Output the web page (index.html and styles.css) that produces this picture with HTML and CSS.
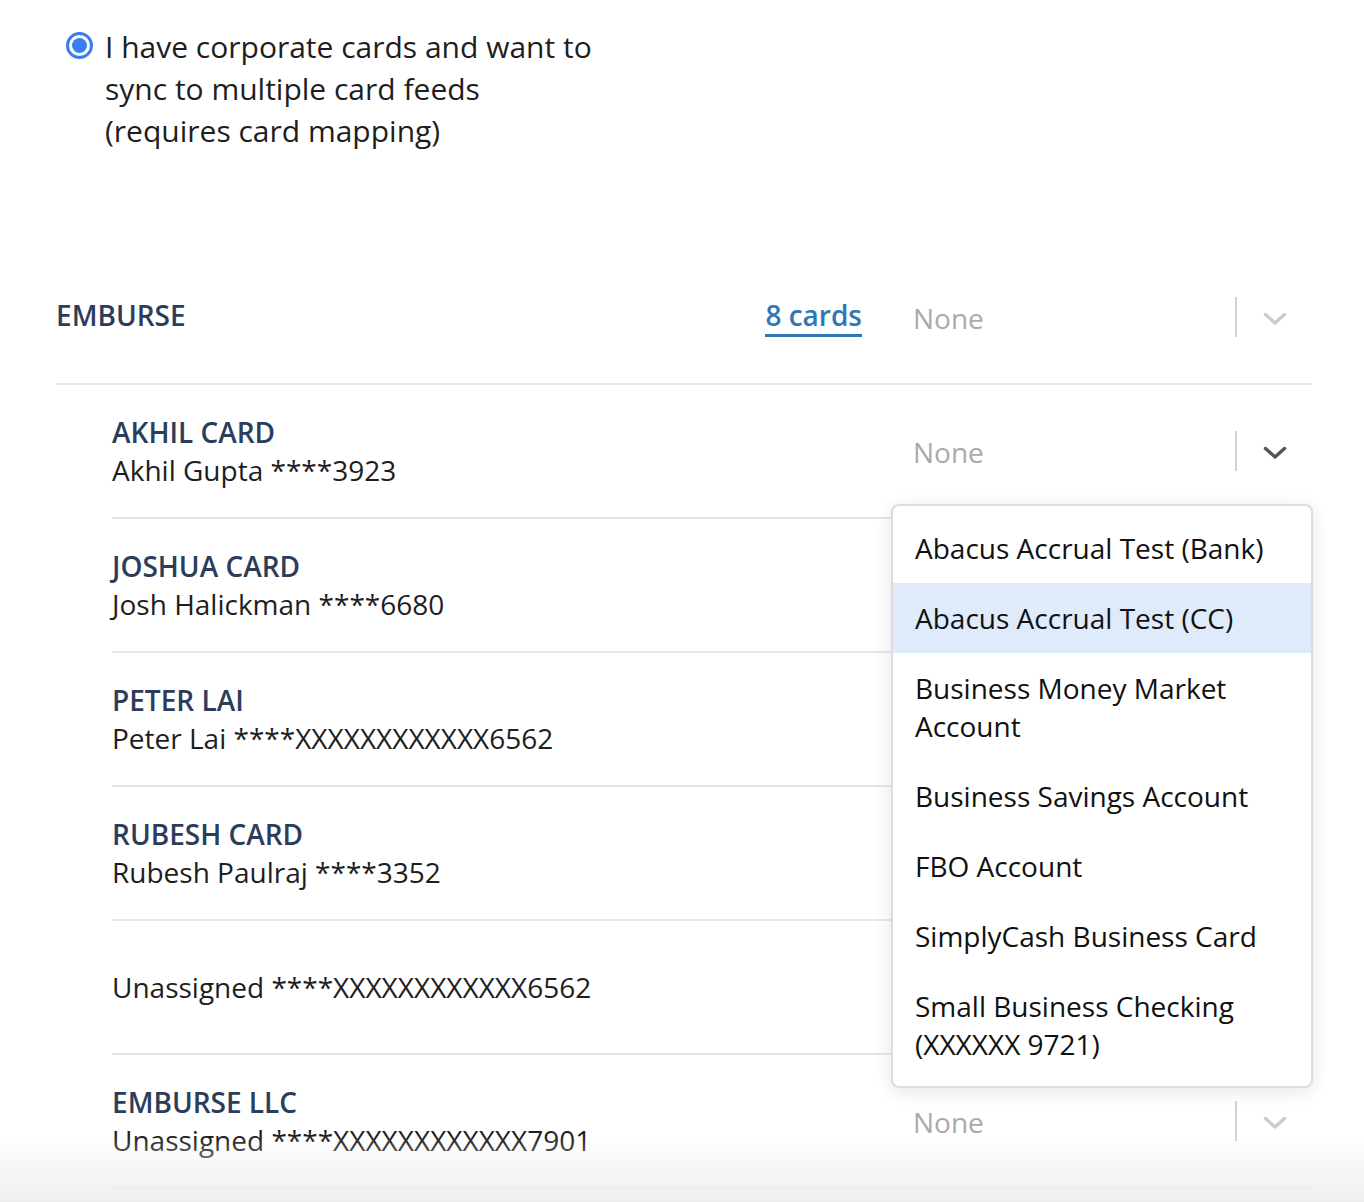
FILE: index.html
```html
<!DOCTYPE html>
<html lang="en">
<head>
<meta charset="utf-8">
<title>Card feeds</title>
<link rel="stylesheet" href="styles.css">
</head>
<body>
<div class="page">
  <label class="radio-option">
    <span class="radio"><span class="radio-dot"></span></span>
    <span class="radio-text">I have corporate cards and want to sync to multiple card feeds (requires card mapping)</span>
  </label>

  <div class="feed">
    <div class="feed-row">
      <div class="feed-name">EMBURSE</div>
      <a class="cards-link" href="#">8 cards</a>
      <div class="select">
        <span class="select-value">None</span>
        <span class="select-sep"></span>
        <span class="select-arrow light"><svg width="24" height="14" viewBox="0 0 24 14"><polyline points="2.5,2.5 12,11 21.5,2.5" fill="none" stroke="currentColor" stroke-width="3.4" stroke-linecap="round" stroke-linejoin="round"/></svg></span>
      </div>
    </div>

    <div class="card-list">
      <div class="card-row open">
        <div class="card-info">
          <div class="card-name">AKHIL CARD</div>
          <div class="card-holder">Akhil Gupta ****3923</div>
        </div>
        <div class="select">
          <span class="select-value">None</span>
          <span class="select-sep"></span>
          <span class="select-arrow dark"><svg width="24" height="14" viewBox="0 0 24 14"><polyline points="2.5,2.5 12,11 21.5,2.5" fill="none" stroke="currentColor" stroke-width="3.4" stroke-linecap="round" stroke-linejoin="round"/></svg></span>
        </div>
        <ul class="menu">
          <li class="menu-item">Abacus Accrual Test (Bank)</li>
          <li class="menu-item active">Abacus Accrual Test (CC)</li>
          <li class="menu-item">Business Money Market Account</li>
          <li class="menu-item">Business Savings Account</li>
          <li class="menu-item">FBO Account</li>
          <li class="menu-item">SimplyCash Business Card</li>
          <li class="menu-item">Small Business Checking (XXXXXX 9721)</li>
        </ul>
      </div>

      <div class="card-row">
        <div class="card-info">
          <div class="card-name">JOSHUA CARD</div>
          <div class="card-holder">Josh Halickman ****6680</div>
        </div>
      </div>

      <div class="card-row">
        <div class="card-info">
          <div class="card-name">PETER LAI</div>
          <div class="card-holder">Peter Lai ****XXXXXXXXXXXX6562</div>
        </div>
      </div>

      <div class="card-row">
        <div class="card-info">
          <div class="card-name">RUBESH CARD</div>
          <div class="card-holder">Rubesh Paulraj ****3352</div>
        </div>
      </div>

      <div class="card-row">
        <div class="card-info">
          <div class="card-holder">Unassigned ****XXXXXXXXXXXX6562</div>
        </div>
      </div>

      <div class="card-row">
        <div class="card-info">
          <div class="card-name">EMBURSE LLC</div>
          <div class="card-holder">Unassigned ****XXXXXXXXXXXX7901</div>
        </div>
        <div class="select">
          <span class="select-value">None</span>
          <span class="select-sep"></span>
          <span class="select-arrow light"><svg width="24" height="14" viewBox="0 0 24 14"><polyline points="2.5,2.5 12,11 21.5,2.5" fill="none" stroke="currentColor" stroke-width="3.4" stroke-linecap="round" stroke-linejoin="round"/></svg></span>
        </div>
      </div>
    </div>
  </div>
  <div class="bottom-fade"></div>
</div>
</body>
</html>
```

FILE: styles.css
```css
* { box-sizing: border-box; }

html, body {
  margin: 0;
  padding: 0;
  background: #ffffff;
}

body {
  font-family: "Open Sans", "Liberation Sans", sans-serif;
  font-size: 28px;
  line-height: 42px;
  color: #1e1e1e;
  overflow: hidden;
  height: 1202px;
}

.page {
  padding: 26px 52px 0 56px;
  position: relative;
  height: 1202px;
}

.radio-option {
  display: flex;
  align-items: flex-start;
  gap: 12px;
  margin-left: 10px;
}

.radio {
  flex: none;
  width: 27px;
  height: 27px;
  margin-top: 6px;
  border-radius: 50%;
  border: 3px solid #3a7df3;
  display: flex;
  align-items: center;
  justify-content: center;
}

.radio-dot {
  width: 15px;
  height: 15px;
  border-radius: 50%;
  background: #3a7df3;
}

.radio-text {
  width: 496px;
  font-size: 30px;
}

.feed {
  margin-top: 99px;
}

.feed-row {
  display: flex;
  align-items: center;
  height: 134px;
  border-bottom: 2px solid #e3e7ec;
}

.feed-name,
.card-name {
  font-weight: 600;
  color: #2c3d5b;
  font-size: 28px;
  line-height: 38px;
}

.feed-name {
  flex: 1;
  margin-top: -4px;
}

.cards-link {
  color: #2f78b6;
  font-weight: 600;
  text-decoration: none;
  border-bottom: 3px solid #2f78b6;
  line-height: 38px;
  margin-right: 28px;
  margin-top: -2px;
}

.select {
  flex: none;
  width: 422px;
  height: 40px;
  display: flex;
  align-items: center;
}

.select-value {
  flex: 1;
  padding-left: 23px;
  color: #aaaaaa;
  margin-top: 2px;
}

.select-sep {
  width: 2px;
  height: 40px;
  background: #d2d2d2;
}

.select-arrow {
  width: 75px;
  display: flex;
  justify-content: center;
  align-items: center;
  padding-top: 3px;
}

.select-arrow svg { display: block; }

.select-arrow.light { color: #cbcbcb; }
.select-arrow.dark { color: #555555; }

.card-list {
  padding-left: 56px;
}

.card-row {
  display: flex;
  align-items: center;
  height: 134px;
  border-bottom: 2px solid #e3e7ec;
  position: relative;
}

.card-info {
  flex: 1;
}

.card-holder {
  line-height: 38px;
}

.menu {
  position: absolute;
  top: 119px;
  right: -1px;
  width: 422px;
  margin: 0;
  padding: 7px 0;
  list-style: none;
  background: #ffffff;
  border: 2px solid #dcdcdc;
  border-radius: 8px;
  box-shadow: 0 4px 18px rgba(0, 0, 0, 0.10);
  z-index: 2;
  overflow: hidden;
}

.menu-item {
  padding: 16px 22px;
  line-height: 38px;
  color: #111111;
}

.menu-item.active {
  background: #dfeafb;
}

.bottom-fade {
  position: absolute;
  left: 0;
  right: 0;
  bottom: 0;
  height: 66px;
  background: linear-gradient(to bottom, rgba(238, 238, 238, 0), rgba(238, 238, 238, 1));
  pointer-events: none;
  z-index: 3;
}
```
